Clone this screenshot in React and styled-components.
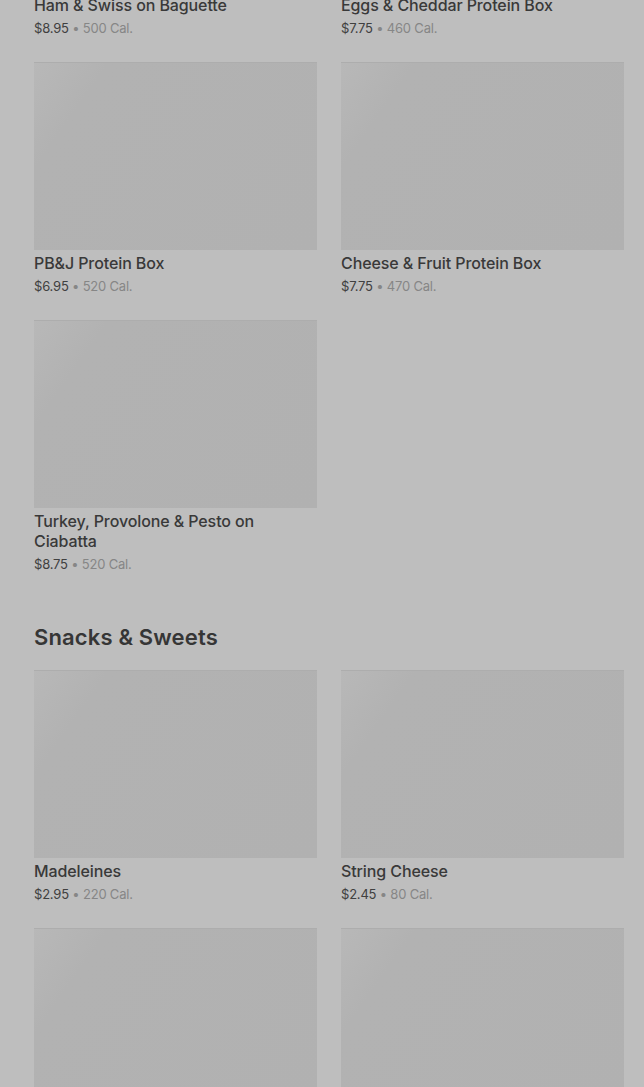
import React from 'react';
import styled, { createGlobalStyle } from 'styled-components';

const GlobalStyle = createGlobalStyle`
  * {
    margin: 0;
    padding: 0;
    box-sizing: border-box;
  }

  html, body {
    background: #bebebe;
    overflow: hidden;
  }

  body {
    font-family: Inter, 'Noto Sans', sans-serif;
    -webkit-font-smoothing: antialiased;
  }
`;

const Page = styled.div`
  height: 100vh;
  overflow: hidden;
  background: #bebebe;
`;

// list is scrolled part way down, like the captured page
const Menu = styled.main`
  margin-top: -196px;
  padding: 0 20px 0 34px;
  display: flex;
  flex-direction: column;
`;

const Section = styled.section`
  display: flex;
  flex-direction: column;
  padding-bottom: 25px;
`;

const SectionTitle = styled.h2`
  font-size: 22px;
  line-height: 28px;
  font-weight: 600;
  letter-spacing: 0.15px;
  color: #363636;
  margin: 25px 0 19px;
`;

const Grid = styled.div`
  display: grid;
  grid-template-columns: 1fr 1fr;
  column-gap: 24px;
  row-gap: 25px;
`;

const Card = styled.article`
  display: flex;
  flex-direction: column;
`;

const Thumb = styled.div`
  height: 188px;
  background: linear-gradient(125deg, #b8b8b8 0%, #b2b2b2 18%, #b1b1b1 100%);
  border-top: 1px solid #adadad;
`;

const Name = styled.h3`
  margin-top: 3px;
  font-size: 16px;
  line-height: 20px;
  font-weight: 500;
  letter-spacing: -0.1px;
  color: #393939;
  padding-right: 40px;
`;

const Meta = styled.p`
  margin-top: 4px;
  font-size: 13px;
  line-height: 18px;
  color: #868686;
  letter-spacing: -0.2px;
`;

const Price = styled.span`
  color: #404040;
`;

const sections = [
  {
    title: null,
    items: [
      { name: 'Ham & Swiss on Baguette', price: '$8.95', cal: 500 },
      { name: 'Eggs & Cheddar Protein Box', price: '$7.75', cal: 460 },
      { name: 'PB&J Protein Box', price: '$6.95', cal: 520 },
      { name: 'Cheese & Fruit Protein Box', price: '$7.75', cal: 470 },
      { name: 'Turkey, Provolone & Pesto on Ciabatta', price: '$8.75', cal: 520 },
    ],
  },
  {
    title: 'Snacks & Sweets',
    items: [
      { name: 'Madeleines', price: '$2.95', cal: 220 },
      { name: 'String Cheese', price: '$2.45', cal: 80 },
      { name: 'Chocolate Chip Cookie', price: '$2.45', cal: 370 },
      { name: 'Marshmallow Dream Bar', price: '$2.45', cal: 210 },
    ],
  },
];

function Item({ item }) {
  return (
    <Card>
      <Thumb />
      <Name>{item.name}</Name>
      <Meta>
        <Price>{item.price}</Price> • {item.cal} Cal.
      </Meta>
    </Card>
  );
}

export default function App() {
  return (
    <>
      <GlobalStyle />
      <Page>
        <Menu>
          {sections.map((s, i) => (
            <Section key={i}>
              {s.title && <SectionTitle>{s.title}</SectionTitle>}
              <Grid>
                {s.items.map((it) => (
                  <Item key={it.name} item={it} />
                ))}
              </Grid>
            </Section>
          ))}
        </Menu>
      </Page>
    </>
  );
}
